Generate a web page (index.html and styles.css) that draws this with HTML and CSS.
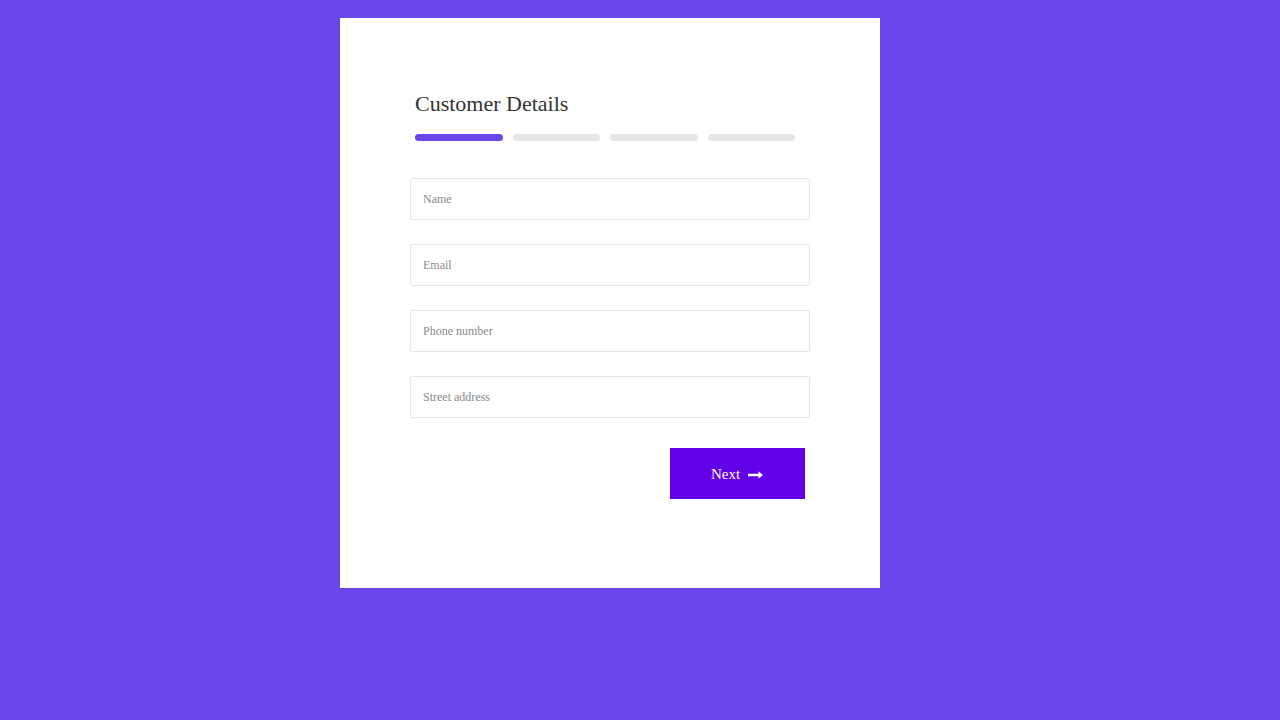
FILE: index.html
```html
<!DOCTYPE html>
<html>
<head>
<meta charset="utf-8">
<link rel="stylesheet" href="styles.css">
</head>
<body>
<div class="page">
  <div class="card">
    <div class="header">
      <h2 class="title">Customer Details</h2>
      <div class="steps">
        <span class="step active"></span>
        <span class="step"></span>
        <span class="step"></span>
        <span class="step"></span>
      </div>
    </div>
    <form class="form">
      <input class="field" type="text" placeholder="Name">
      <input class="field" type="text" placeholder="Email">
      <input class="field" type="text" placeholder="Phone number">
      <input class="field" type="text" placeholder="Street address">
      <div class="actions">
        <button type="button" class="next">Next
          <svg class="arrow" width="15" height="8" viewBox="0 0 15 8"><path d="M0 2.8h10.5V0.3L15 4l-4.5 3.7V5.2H0z" fill="#fff"/></svg>
        </button>
      </div>
    </form>
  </div>
</div>
</body>
</html>
```
FILE: styles.css
```css
html, body {
  margin: 0;
  padding: 0;
  background: #6a47ea;
  font-family: "Liberation Serif", "Times New Roman", serif;
}
.page {
  width: 1280px;
  height: 720px;
  padding-top: 18px;
  box-sizing: border-box;
  display: flex;
  justify-content: flex-start;
  padding-left: 340px;
}
.card {
  width: 540px;
  height: 570px;
  background: #fff;
  box-sizing: border-box;
  padding: 73px 70px 0 70px;
}
.header {
  padding: 0 5px;
}
.title {
  margin: 0;
  font-weight: normal;
  font-size: 22px;
  line-height: 26px;
  color: #333;
}
.steps {
  display: flex;
  gap: 10px;
  margin-top: 17px;
  width: 380px;
}
.step {
  flex: 1;
  height: 7px;
  border-radius: 4px;
  background: #e6e6e6;
}
.step.active {
  background: #6a47ea;
}
.form {
  margin-top: 37px;
  display: flex;
  flex-direction: column;
  gap: 24px;
}
.field {
  width: 400px;
  height: 42px;
  box-sizing: border-box;
  border: 1px solid #e6e6e6;
  border-radius: 2px;
  padding: 0 12px;
  font-family: "Liberation Serif", "Times New Roman", serif;
  font-size: 12px;
  color: #333;
  outline: none;
  margin: 0;
}
.field::placeholder {
  color: #8a8a8a;
}
.actions {
  display: flex;
  justify-content: flex-end;
  padding-right: 5px;
  margin-top: 6px;
}
.next {
  width: 135px;
  height: 51px;
  background: #6200e6;
  border: none;
  border-radius: 0;
  color: #fff;
  font-family: "Liberation Serif", "Times New Roman", serif;
  font-size: 15px;
  display: flex;
  align-items: center;
  justify-content: center;
  gap: 8px;
  padding: 2px 1px 0 0;
}
.arrow {
  display: block;
}
```
